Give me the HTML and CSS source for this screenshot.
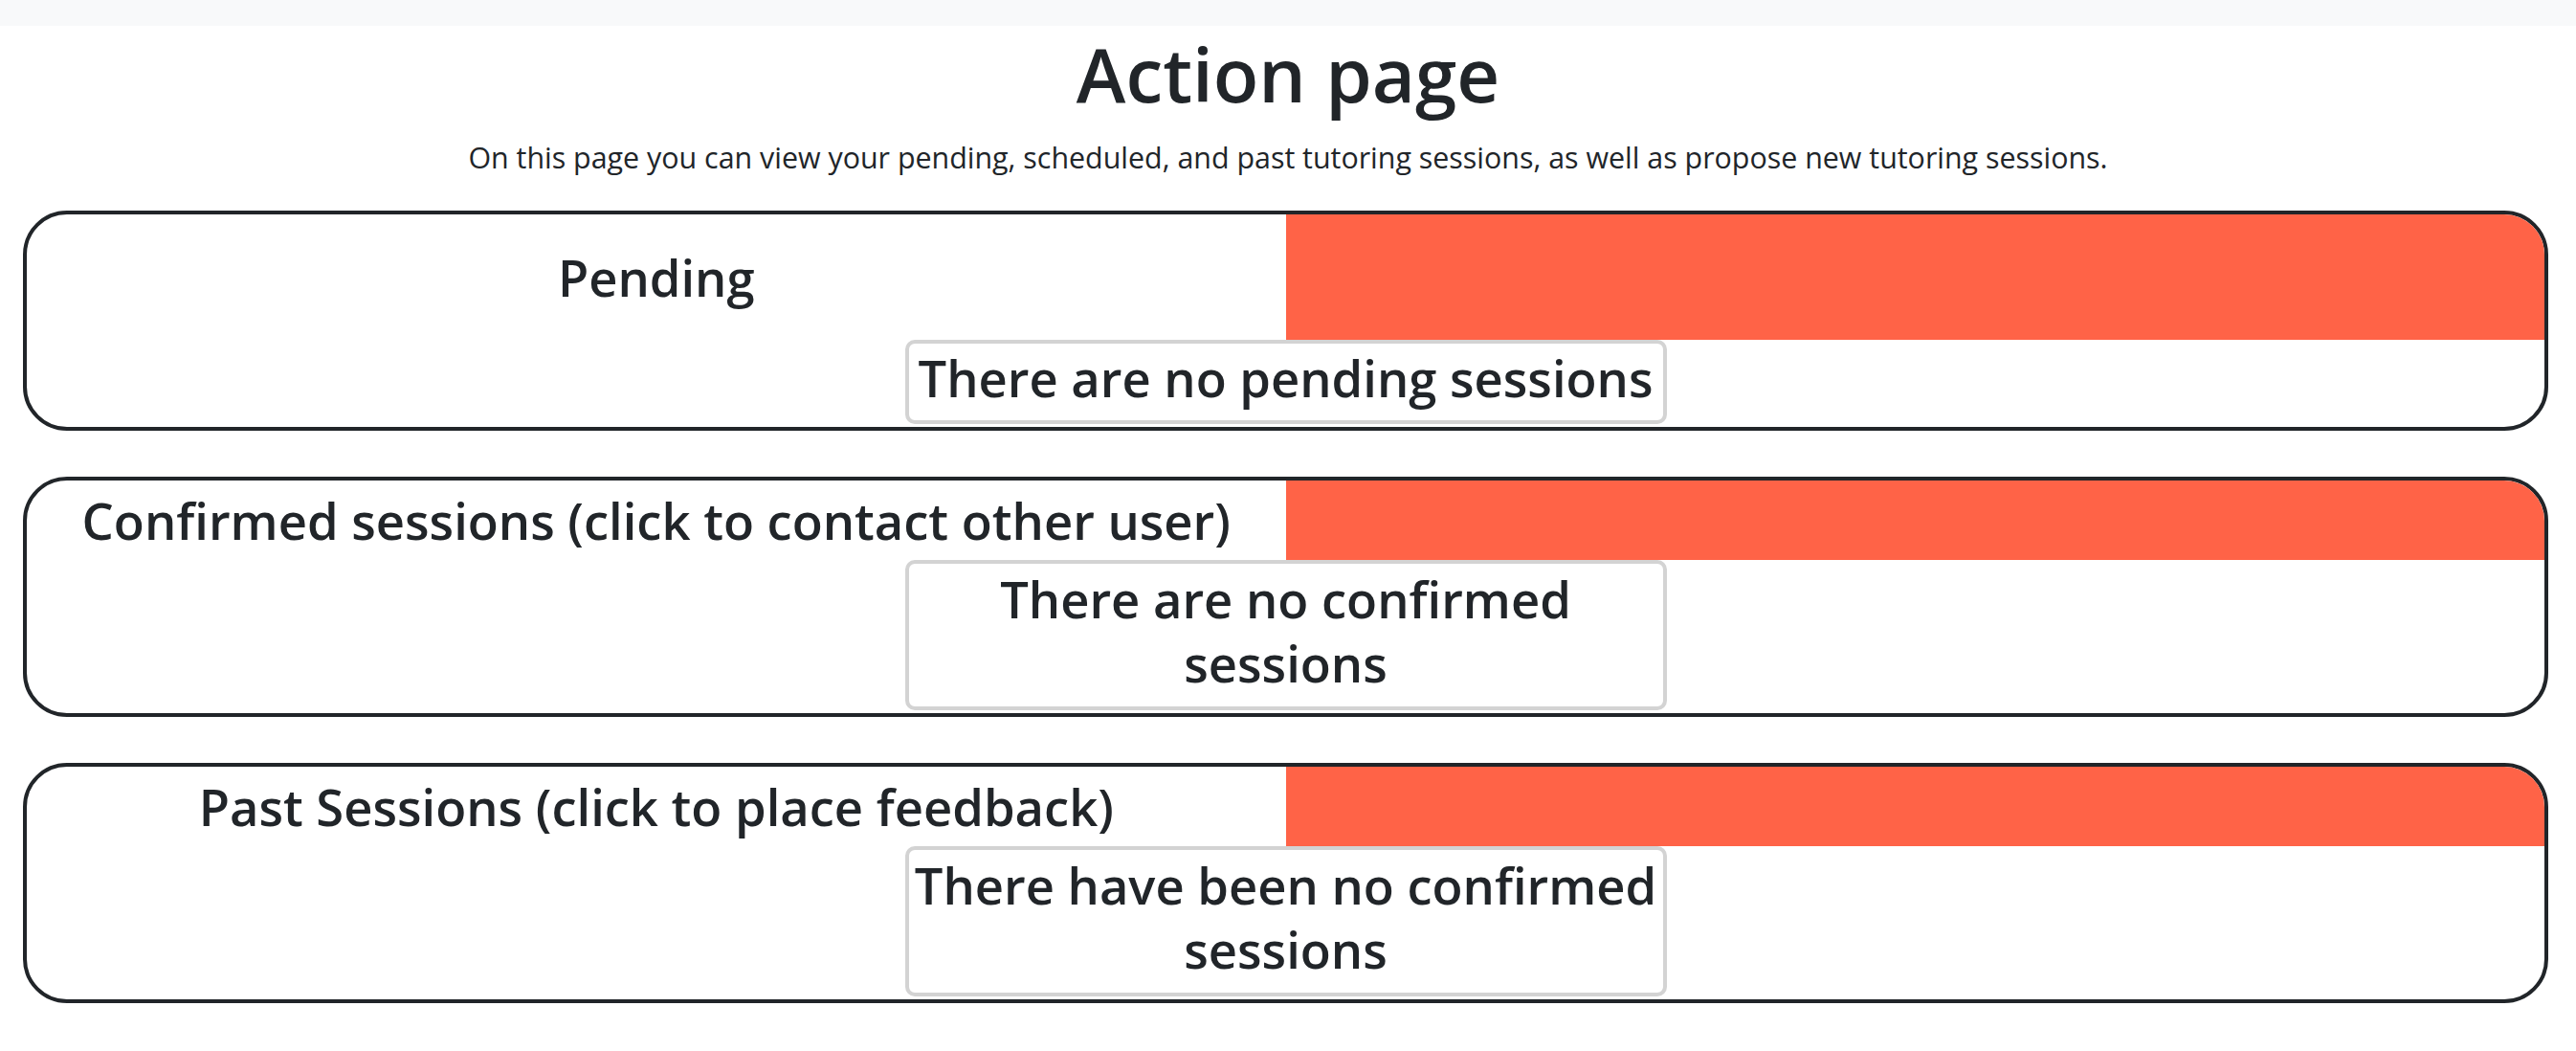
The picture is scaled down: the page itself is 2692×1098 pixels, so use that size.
FILE: index.html
```html
<!DOCTYPE html>
<html lang="en">
<head>
<meta charset="utf-8">
<title>Action page</title>
<link rel="stylesheet" href="styles.css">
</head>
<body>
<div class="topbar"></div>
<main class="page">
  <h1 class="page-title">Action page</h1>
  <p class="page-lead">On this page you can view your pending, scheduled, and past tutoring sessions, as well as propose new tutoring sessions.</p>

  <section class="panel panel-pending">
    <h3 class="panel-title">Pending</h3>
    <div class="panel-fill"></div>
    <div class="panel-body">
      <h3 class="empty-box">There are no pending sessions</h3>
    </div>
  </section>

  <section class="panel">
    <h3 class="panel-title">Confirmed sessions (click to contact other user)</h3>
    <div class="panel-fill"></div>
    <div class="panel-body">
      <h3 class="empty-box">There are no confirmed sessions</h3>
    </div>
  </section>

  <section class="panel">
    <h3 class="panel-title">Past Sessions (click to place feedback)</h3>
    <div class="panel-fill"></div>
    <div class="panel-body">
      <h3 class="empty-box">There have been no confirmed sessions</h3>
    </div>
  </section>
</main>
</body>
</html>
```

FILE: styles.css
```css
* { box-sizing: border-box; }

html, body {
  margin: 0;
  padding: 0;
  background: #ffffff;
}

body {
  font-family: "Open Sans", "Noto Sans", "Liberation Sans", sans-serif;
  color: #212529;
}

.topbar {
  height: 27px;
  background: #f8f9fa;
}

.page {
  display: flex;
  flex-direction: column;
}

.page-title {
  margin: 2px 0 0;
  font-size: 78px;
  font-weight: 600;
  line-height: 96px;
  text-align: center;
}

.page-lead {
  margin: 16px 0 0;
  font-size: 30.4px;
  line-height: 48px;
  text-align: center;
}

.panel {
  display: grid;
  grid-template-columns: 1fr 1fr;
  margin: 31px 29px 0 24px;
  border: 4px solid #212529;
  border-radius: 46px;
  overflow: hidden;
}

.panel + .panel {
  margin-top: 48px;
}

.panel-title {
  margin: 0;
  padding: 8px 0;
  font-size: 52.5px;
  font-weight: 600;
  line-height: 67px;
  text-align: center;
}

.panel-pending .panel-title {
  padding: 32px 0;
}

.panel-fill {
  background: tomato;
}

.panel-body {
  grid-column: 1 / -1;
  display: flex;
  justify-content: center;
  padding-bottom: 3px;
}

.empty-box {
  width: 796px;
  margin: 0;
  padding: 3px 0 12px;
  border: 4px solid #d3d3d3;
  border-radius: 10px;
  font-size: 52.5px;
  font-weight: 600;
  line-height: 67px;
  text-align: center;
}

.panel-pending .empty-box {
  padding: 2px 0 11px;
}
```
